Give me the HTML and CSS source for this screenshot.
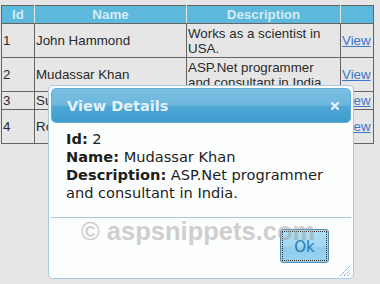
FILE: index.html
```html
<!DOCTYPE html>
<html>
<head>
  <meta charset="UTF-8">
  <title>View Details</title>
  <link rel="stylesheet" href="styles.css">
</head>
<body>
  <table class="grid">
    <colgroup>
      <col class="c-id">
      <col class="c-name">
      <col class="c-desc">
      <col class="c-view">
    </colgroup>
    <tr>
      <th>Id</th>
      <th>Name</th>
      <th>Description</th>
      <th></th>
    </tr>
    <tr class="tall">
      <td>1</td>
      <td>John Hammond</td>
      <td>Works as a scientist in USA.</td>
      <td><a href="#">View</a></td>
    </tr>
    <tr class="tall">
      <td>2</td>
      <td>Mudassar Khan</td>
      <td>ASP.Net programmer and consultant in India.</td>
      <td><a href="#">View</a></td>
    </tr>
    <tr>
      <td>3</td>
      <td>Suzanne Mathews</td>
      <td>Content Writer in France.</td>
      <td><a href="#">View</a></td>
    </tr>
    <tr class="tall">
      <td>4</td>
      <td>Robert Schidner</td>
      <td>Wild life photographer in Russia.</td>
      <td><a href="#">View</a></td>
    </tr>
  </table>

  <div class="dialog">
    <div class="titlebar">
      <span class="title">View Details</span>
      <svg class="close" width="8" height="8" viewBox="0 0 8 8">
        <path d="M1 1 L7 7 M7 1 L1 7" stroke="#e2f1f9" stroke-width="2.4" stroke-linecap="square"/>
      </svg>
    </div>
    <div class="content">
      <div><b>Id:</b> 2</div>
      <div><b>Name:</b> Mudassar Khan</div>
      <div><b>Description:</b> ASP.Net programmer and consultant in India.</div>
    </div>
    <div class="buttonpane">
      <button class="ok" type="button"><span>Ok</span></button>
    </div>
    <div class="watermark">© aspsnippets.com</div>
    <svg class="grip" width="12" height="12" viewBox="0 0 12 12">
      <path d="M1 11 L11 1 M5 11 L11 5 M8.5 11 L11 8.5" stroke="#5b9fd4" stroke-width="1" stroke-dasharray="1.4 0.8"/>
    </svg>
  </div>
</body>
</html>
```

FILE: styles.css
```css
body {
  margin: 0;
  background: #e6e6e6;
  font-family: "Liberation Sans", Arial, sans-serif;
}

.grid {
  border-collapse: collapse;
  table-layout: fixed;
  width: 372px;
  margin: 5px 0 0 1px;
  font-size: 13.33px;
  line-height: 15px;
  color: #2a2a2a;
}
.grid th, .grid td {
  border: 1px solid #646464;
  padding: 1px 1px;
  text-align: left;
  vertical-align: middle;
}
.grid th {
  background: #5cb9dc;
  color: #d4ebf5;
  text-align: center;
  height: 15px;
  border-left-color: #e0e8ec;
  border-right-color: #e0e8ec;
}
.grid th:first-child { border-left-color: #646464; }
.grid th:last-child { border-right-color: #646464; }
.grid tr.tall td { height: 31px; }
.c-id { width: 33px; }
.c-name { width: 152px; }
.c-desc { width: 154px; }
.c-view { width: 33px; }
.grid a { color: #3b76c8; }

.dialog {
  position: absolute;
  left: 48px;
  top: 85px;
  width: 300px;
  height: 188px;
  padding: 2px;
  border: 1px solid #a6c9e2;
  border-radius: 5px;
  background: #fcfdfd;
  font-family: "DejaVu Sans", Verdana, sans-serif;
}

.titlebar {
  height: 33px;
  border: 1px solid #62aed9;
  border-radius: 5px;
  background: linear-gradient(#7cc0e3 0%, #6db6de 48%, #4ea6d4 54%, #3e9dcf 100%);
  display: flex;
  align-items: center;
  justify-content: space-between;
  padding: 0 11px 0 15px;
}
.title {
  color: #e4f2fa;
  font-weight: bold;
  font-size: 14.5px;
}

.content {
  height: 87px;
  padding: 7px 12px 0 15px;
  font-size: 14.6px;
  line-height: 18px;
  color: #1e1e1e;
}

.buttonpane {
  border-top: 1px solid #a6c9e2;
  display: flex;
  justify-content: flex-end;
  padding: 11px 22px 0 0;
}
.ok {
  width: 49px;
  height: 34px;
  padding: 1px;
  border: 1px solid #4f8db5;
  border-radius: 3px;
  background: linear-gradient(#b0def5 0%, #a2d7f2 50%, #8dcdee 56%, #9ad3f0 100%);
  font-family: "DejaVu Sans", Verdana, sans-serif;
  font-size: 15px;
  color: #2b78ac;
}
.ok span {
  display: flex;
  align-items: center;
  justify-content: center;
  height: 100%;
  border: 1px dotted #3a2a20;
  padding-top: 2px;
  box-sizing: border-box;
}

.watermark {
  position: absolute;
  left: 32px;
  top: 133px;
  font-family: "Liberation Sans", Arial, sans-serif;
  font-weight: bold;
  font-size: 25.5px;
  line-height: 25.5px;
  color: rgba(160, 160, 160, 0.5);
  white-space: nowrap;
}

.grip {
  position: absolute;
  right: 2px;
  bottom: 1px;
}
```
